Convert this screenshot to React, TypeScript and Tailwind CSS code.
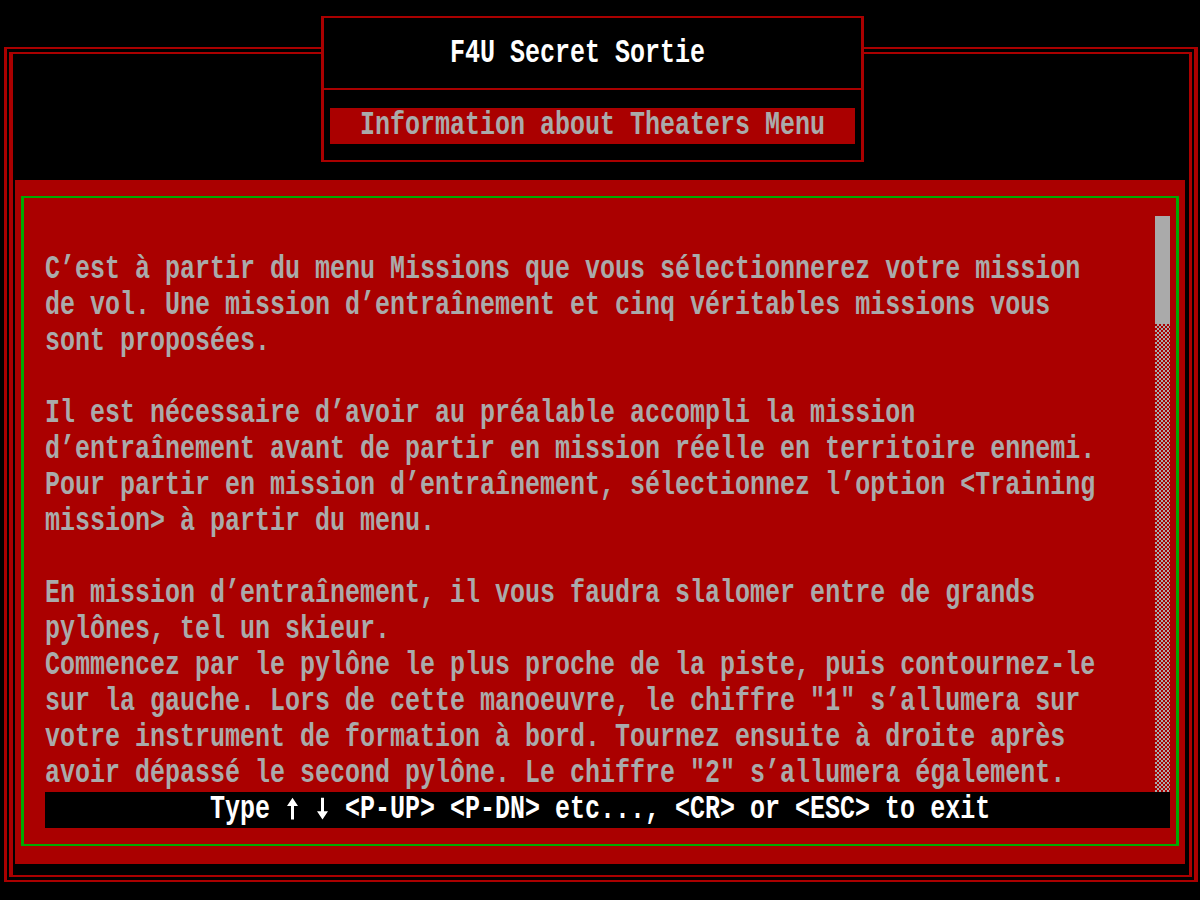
const lines = [
  "",
  "C’est à partir du menu Missions que vous sélectionnerez votre mission",
  "de vol. Une mission d’entraînement et cinq véritables missions vous",
  "sont proposées.",
  "",
  "Il est nécessaire d’avoir au préalable accompli la mission",
  "d’entraînement avant de partir en mission réelle en territoire ennemi.",
  "Pour partir en mission d’entraînement, sélectionnez l’option <Training",
  "mission> à partir du menu.",
  "",
  "En mission d’entraînement, il vous faudra slalomer entre de grands",
  "pylônes, tel un skieur.",
  "Commencez par le pylône le plus proche de la piste, puis contournez-le",
  'sur la gauche. Lors de cette manoeuvre, le chiffre "1" s’allumera sur',
  "votre instrument de formation à bord. Tournez ensuite à droite après",
  'avoir dépassé le second pylône. Le chiffre "2" s’allumera également.',
];

function Row({ children, className = "" }: { children: React.ReactNode; className?: string }) {
  return (
    <div className={`h-[36px] leading-[36px] whitespace-pre scale-y-[1.35] ${className}`}>
      {children || "\u00a0"}
    </div>
  );
}

// VGA-style arrow glyph
function Arrow({ down = false }: { down?: boolean }) {
  return (
    <svg
      width="15"
      height="18"
      viewBox="0 0 15 18"
      className={`inline-block align-[-2px] ${down ? "rotate-180" : ""}`}
      fill="white"
    >
      <polygon points="7.5,1 2,7 6,7 6,17 9,17 9,7 13,7" />
    </svg>
  );
}

export default function App() {
  return (
    <div className="relative w-[1200px] h-[900px] overflow-hidden bg-black pt-[47px] pl-[4px] font-['Liberation_Mono','DejaVu_Sans_Mono',monospace] text-[25px] font-bold text-[#aaaaaa]">
      {/* double frame */}
      <div className="w-[1194px] h-[835px] border-[#aa0000] border-t-2 border-b-2 border-l-[3px] border-r-[4px] px-[2px] py-[3px]">
        <div className="h-full border-[#aa0000] border-t-2 border-b-2 border-l-4 border-r-[3px] pl-[2px] pr-[4px] pt-[126px] pb-[11px]">
          {/* red panel */}
          <div className="h-full bg-[#aa0000] pl-[6px] pr-[6px] pt-[16px] pb-[18px]">
            <div className="h-full border-[#00aa00] border-t-2 border-b-2 border-x-[3px] pl-[21px] pr-[6px] pt-[18px]">
              <div className="flex">
                <div className="w-[1110px]">
                  {lines.map((l, i) => (
                    <Row key={i}>{l}</Row>
                  ))}
                </div>
                <div className="w-[15px] h-[576px] flex flex-col">
                  <div className="h-[108px] bg-[#aaaaaa]" />
                  <div className="flex-1 bg-[repeating-conic-gradient(#aaaaaa_0_25%,#aa0000_0_50%)] bg-[length:4px_4px]" />
                </div>
              </div>
              <div className="w-[1125px] h-[36px] bg-black pl-[165px] text-white">
                <Row>
                  {"Type "}
                  <Arrow />
                  {" "}
                  <Arrow down />
                  {" <P-UP> <P-DN> etc..., <CR> or <ESC> to exit"}
                </Row>
              </div>
            </div>
          </div>
        </div>
      </div>

      {/* title window */}
      <div className="absolute left-[321px] top-[16px] w-[543px] h-[146px] bg-black border-[#aa0000] border-t-2 border-b-2 border-x-[3px] flex flex-col">
        <div className="h-[70px] pt-[18px] pl-[126px] text-white">
          <Row>F4U Secret Sortie</Row>
        </div>
        <div className="h-[2px] bg-[#aa0000]" />
        <div className="flex-1 pt-[18px] px-[6px]">
          <div className="h-[36px] bg-[#aa0000] pl-[30px]">
            <Row>Information about Theaters Menu</Row>
          </div>
        </div>
      </div>
    </div>
  );
}
